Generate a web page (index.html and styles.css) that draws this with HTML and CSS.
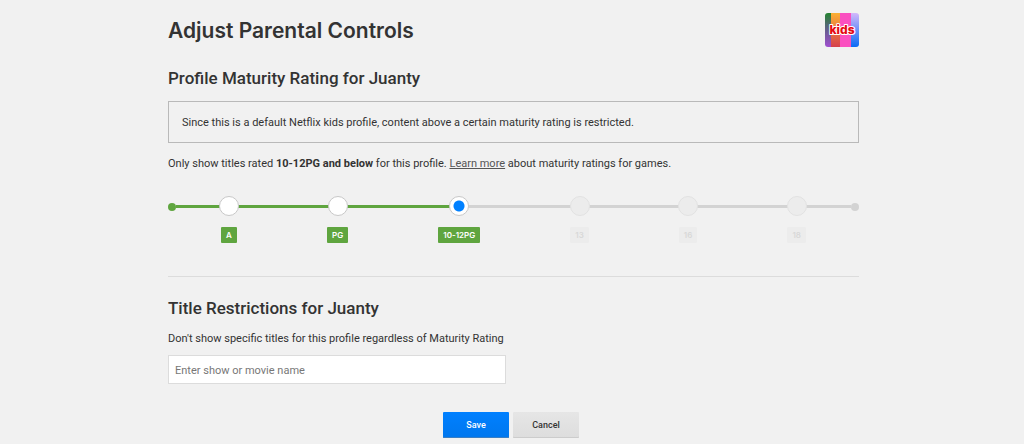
FILE: index.html
```html
<!DOCTYPE html>
<html lang="en">

<head>
    <meta charset="UTF-8" />
    <meta name="viewport" content="width=device-width, initial-scale=1.0" />
    <title>Parental Controls</title>
    <link rel="stylesheet" href="styles.css">
</head>

<body>
    <main class="page">
        <header class="page-header">
            <h1>Adjust Parental Controls</h1>
            <svg class="avatar" viewBox="0 0 34 34" role="img" aria-label="kids">
                <defs>
                    <linearGradient id="green" x1="0" y1="0" x2="0" y2="1">
                        <stop offset="0" stop-color="#23832f" />
                        <stop offset="0.5" stop-color="#665d8c" />
                        <stop offset="1" stop-color="#a04fd0" />
                    </linearGradient>
                    <linearGradient id="orange" x1="0" y1="0" x2="0" y2="1">
                        <stop offset="0" stop-color="#fbb034" />
                        <stop offset="1" stop-color="#d5404c" />
                    </linearGradient>
                    <linearGradient id="blue" x1="0" y1="0" x2="0" y2="1">
                        <stop offset="0" stop-color="#d3b8fb" />
                        <stop offset="1" stop-color="#0a6cf5" />
                    </linearGradient>
                    <clipPath id="tile">
                        <rect width="34" height="34" rx="3" />
                    </clipPath>
                </defs>
                <g clip-path="url(#tile)">
                    <rect width="7" height="34" fill="url(#green)" />
                    <rect x="6" width="9" height="34" fill="url(#orange)" />
                    <rect x="15" width="11" height="34" fill="#fa50c0" />
                    <rect x="26" width="8" height="34" fill="url(#blue)" />
                </g>
                <text class="avatar-text" x="17" y="21" text-anchor="middle">kids</text>
            </svg>
        </header>

        <form class="controls-form">
            <section class="maturity">
                <h2>Profile Maturity Rating for Juanty</h2>
                <p class="notice">Since this is a default Netflix kids profile, content above a certain maturity rating is restricted.</p>
                <p class="text">Only show titles rated <b>10-12PG and below</b> for this profile. <a href="#">Learn more</a> about maturity ratings for games.</p>

                <div class="slider" role="radiogroup" aria-label="Maturity rating">
                    <span class="end on"></span>
                    <label class="step on">
                        <input type="radio" name="rating" value="A" />
                        <span class="tag">A</span>
                    </label>
                    <label class="step on">
                        <input type="radio" name="rating" value="PG" />
                        <span class="tag">PG</span>
                    </label>
                    <label class="step on current">
                        <input type="radio" name="rating" value="10-12PG" checked />
                        <span class="tag">10-12PG</span>
                    </label>
                    <label class="step">
                        <input type="radio" name="rating" value="13" disabled />
                        <span class="tag">13</span>
                    </label>
                    <label class="step">
                        <input type="radio" name="rating" value="16" disabled />
                        <span class="tag">16</span>
                    </label>
                    <label class="step">
                        <input type="radio" name="rating" value="18" disabled />
                        <span class="tag">18</span>
                    </label>
                    <span class="end"></span>
                </div>
            </section>

            <section class="restrictions">
                <h2>Title Restrictions for Juanty</h2>
                <label class="text" for="titleSearch">Don't show specific titles for this profile regardless of Maturity Rating</label>
                <input type="text" id="titleSearch" name="title" class="title-search" placeholder="Enter show or movie name" />
            </section>

            <div class="buttons">
                <button type="submit" class="btn save">Save</button>
                <button type="button" class="btn cancel">Cancel</button>
            </div>
        </form>
    </main>
</body>

</html>
```

FILE: styles.css
```css
* {
    box-sizing: border-box;
}

body {
    margin: 0;
    background-color: #f1f1f1;
    color: #333;
    font-family: Roboto, Arial, sans-serif;
    font-size: 11px;
    line-height: 16px;
}

.page {
    max-width: 694px;
    margin: 0 auto;
    padding: 13px 0 0 3px;
}

.page-header {
    display: flex;
    justify-content: space-between;
    align-items: center;
}

h1,
h2,
p {
    margin: 0;
}

h1 {
    font-family: Inter, sans-serif;
    font-size: 21px;
    line-height: 36px;
    font-weight: 600;
}

h2 {
    font-size: 17px;
    line-height: 24px;
    font-weight: 500;
}

.avatar {
    width: 34px;
    height: 34px;
    align-self: flex-start;
}

.avatar-text {
    font-family: Inter, sans-serif;
    font-size: 12px;
    font-weight: 800;
    fill: #e50914;
    stroke: #fff;
    stroke-width: 2px;
    stroke-linejoin: round;
    paint-order: stroke;
}

.maturity {
    padding: 17px 0 33px;
    border-bottom: 1px solid #dcdcdc;
}

.notice {
    margin: 11px 0 13px;
    padding: 13px 13px 11px;
    border: 1px solid #b9b9b9;
}

.text {
    display: block;
}

.text a {
    color: #555;
    text-decoration: underline;
}

/* rating slider */
.slider {
    display: flex;
    margin-top: 24px;
}

.step {
    flex: 1 1 auto;
    display: flex;
    flex-direction: column;
    align-items: center;
    gap: 11px;
    background: linear-gradient(#d3d3d3, #d3d3d3) 0 9px / 100% 3px no-repeat;
}

.step.on {
    background-image: linear-gradient(#5fa53f, #5fa53f);
}

.step.current {
    background-image: linear-gradient(to right, #5fa53f 50%, #d3d3d3 50%);
}

.step input {
    appearance: none;
    width: 20px;
    height: 20px;
    margin: 0 -3px;
    border: 1px solid #c8c8c8;
    border-radius: 50%;
    background-color: #fff;
}

.step input:checked {
    background-image: radial-gradient(circle, #0080ff 5px, transparent 6px);
}

.step input:disabled {
    border-color: #e2e2e2;
    background-color: #ececec;
}

.end {
    width: 8px;
    height: 8px;
    margin-top: 7px;
    border-radius: 50%;
    background-color: #d3d3d3;
}

.end.on {
    background-color: #5fa53f;
}

.tag {
    padding: 0 5px;
    border-radius: 1px;
    background-color: #ececec;
    color: #d8d8d8;
    font-family: Inter, sans-serif;
    font-size: 8px;
    font-weight: 600;
}

.on .tag {
    background-color: #5fa53f;
    color: #fff;
}

.restrictions {
    padding-top: 19px;
}

.restrictions .text {
    margin: 11px 0 8px;
}

.title-search {
    display: block;
    width: 338px;
    max-width: 100%;
    height: 29px;
    padding: 1px 6px 0;
    border: 1px solid #dcdcdc;
    background-color: #fff;
    color: #333;
    font: inherit;
}

.title-search::placeholder {
    color: #777;
}

.buttons {
    display: flex;
    justify-content: center;
    gap: 4px;
    margin-top: 28px;
    padding-right: 5px;
}

.btn {
    width: 66px;
    height: 26px;
    border: none;
    border-radius: 1px;
    font-family: inherit;
    font-size: 9px;
    font-weight: 500;
    cursor: pointer;
}

.save {
    background: linear-gradient(#0080ff, #0077ee);
    box-shadow: inset 0 -1px 0 #3a7fc4;
    color: #fff;
}

.cancel {
    background: linear-gradient(#e6e6e6, #ddd);
    box-shadow: inset 0 -1px 0 #ccc;
    color: #333;
}
```
